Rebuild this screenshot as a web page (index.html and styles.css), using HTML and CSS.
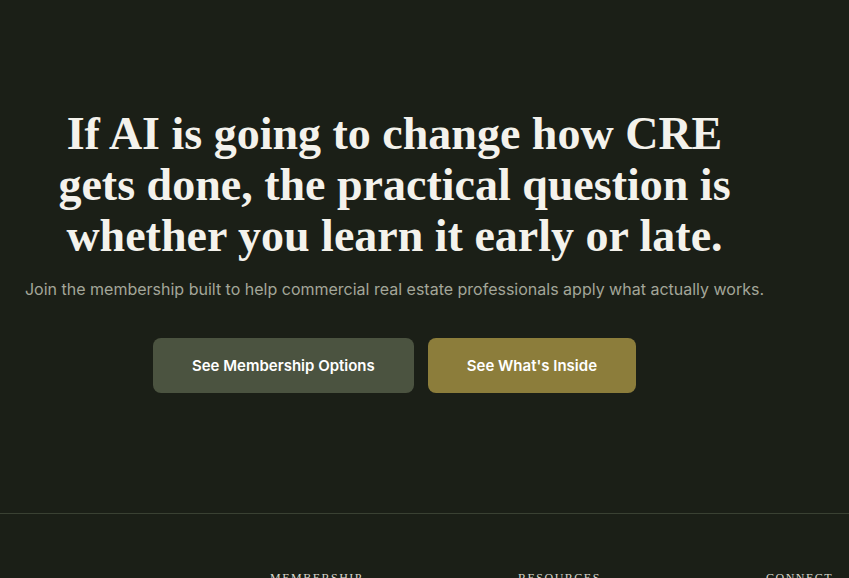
FILE: index.html
```html
<!DOCTYPE html>
<html lang="en">
<head>
<meta charset="utf-8">
<title>CRE AI Membership</title>
<link rel="stylesheet" href="styles.css">
</head>
<body>
<main class="page">
  <section class="hero">
    <h1 class="hero-title">If AI is going to change how CRE<br>gets done, the practical question is<br>whether you learn it early or late.</h1>
    <p class="hero-sub">Join the membership built to help commercial real estate professionals apply what actually works.</p>
    <div class="hero-actions">
      <a class="btn btn-muted" href="#">See Membership Options</a>
      <a class="btn btn-gold" href="#">See What's Inside</a>
    </div>
  </section>
  <footer class="footer">
    <div class="footer-grid">
      <div class="footer-brand"></div>
      <div class="footer-col"><h4 class="footer-head">Membership</h4></div>
      <div class="footer-col"><h4 class="footer-head">Resources</h4></div>
      <div class="footer-col"><h4 class="footer-head">Connect</h4></div>
    </div>
  </footer>
</main>
</body>
</html>
```
FILE: styles.css
```css
html, body {
  margin: 0;
  padding: 0;
  background: #1b1f17;
  overflow: hidden;
}
body {
  font-family: Inter, "Liberation Sans", sans-serif;
  color: #f3f1ea;
}
.page {
  width: 849px;
}
.hero {
  width: 789px;
  box-sizing: border-box;
  padding: 108px 0 120px;
  text-align: center;
}
.hero-title {
  margin: 0;
  font-family: "Liberation Serif", serif;
  font-weight: 700;
  font-size: 46px;
  line-height: 51px;
  color: #f4f2ec;
}
.hero-sub {
  margin: 16px 0 0;
  font-size: 16px;
  line-height: 24px;
  color: #a3a699;
}
.hero-actions {
  display: flex;
  justify-content: center;
  gap: 14px;
  margin-top: 37px;
}
.btn {
  display: inline-block;
  padding: 18px 39px;
  border-radius: 8px;
  font-size: 15px;
  line-height: 19px;
  font-weight: 600;
  color: #ffffff;
  text-decoration: none;
}
.btn-muted {
  background: #4b5340;
}
.btn-gold {
  background: #8c7d3b;
}
.footer {
  border-top: 1px solid #3a4133;
  padding-top: 56px;
}
.footer-grid {
  display: grid;
  grid-template-columns: 270px 248px 248px 248px;
}
.footer-head {
  margin: 0;
  font-family: "Liberation Serif", serif;
  font-weight: 400;
  font-size: 12px;
  line-height: 16px;
  letter-spacing: 1.5px;
  text-transform: uppercase;
  color: #d8d6cc;
}
```
